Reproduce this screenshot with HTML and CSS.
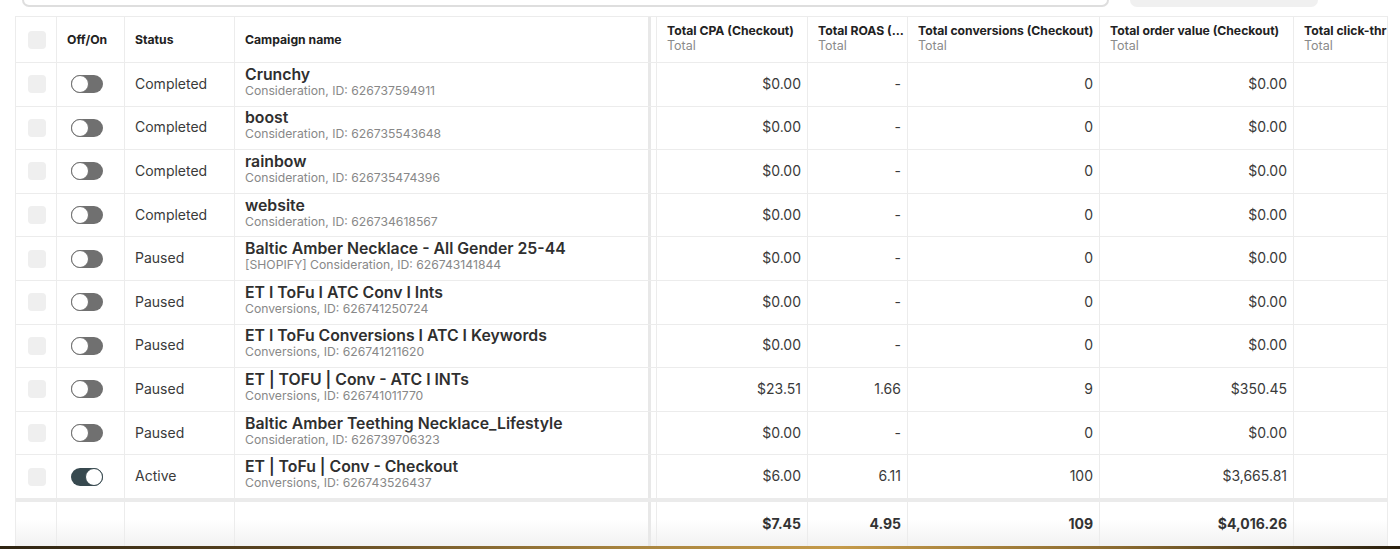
FILE: index.html
```html
<!DOCTYPE html>
<html>
<head>
<meta charset="utf-8">
<link rel="stylesheet" href="styles.css">
</head>
<body>
<div class="topbar">
  <div class="search"></div>
  <div class="pill"></div>
</div>
<div class="table">
  <div class="row head">
    <div class="cell chk"><span class="box"></span></div>
    <div class="cell">Off/On</div>
    <div class="cell">Status</div>
    <div class="cell name sticky">Campaign name</div>
    <div class="cell spacer"></div>
    <div class="cell metric"><span class="t">Total CPA (Checkout)</span><span class="s">Total</span></div>
    <div class="cell metric trunc"><span class="t">Total ROAS (...</span><span class="s">Total</span></div>
    <div class="cell metric"><span class="t">Total conversions (Checkout)</span><span class="s">Total</span></div>
    <div class="cell metric"><span class="t">Total order value (Checkout)</span><span class="s">Total</span></div>
    <div class="cell metric clip"><span class="t">Total click-thr</span><span class="s">Total</span></div>
  </div>

  <div class="row">
    <div class="cell chk"><span class="box"></span></div>
    <div class="cell tog"><span class="toggle"></span></div>
    <div class="cell status">Completed</div>
    <div class="cell name sticky"><span class="cn">Crunchy</span><span class="sub">Consideration, ID: 626737594911</span></div>
    <div class="cell spacer"></div>
    <div class="cell num">$0.00</div>
    <div class="cell num">-</div>
    <div class="cell num">0</div>
    <div class="cell num">$0.00</div>
    <div class="cell"></div>
  </div>
  <div class="row">
    <div class="cell chk"><span class="box"></span></div>
    <div class="cell tog"><span class="toggle"></span></div>
    <div class="cell status">Completed</div>
    <div class="cell name sticky"><span class="cn">boost</span><span class="sub">Consideration, ID: 626735543648</span></div>
    <div class="cell spacer"></div>
    <div class="cell num">$0.00</div>
    <div class="cell num">-</div>
    <div class="cell num">0</div>
    <div class="cell num">$0.00</div>
    <div class="cell"></div>
  </div>
  <div class="row">
    <div class="cell chk"><span class="box"></span></div>
    <div class="cell tog"><span class="toggle"></span></div>
    <div class="cell status">Completed</div>
    <div class="cell name sticky"><span class="cn">rainbow</span><span class="sub">Consideration, ID: 626735474396</span></div>
    <div class="cell spacer"></div>
    <div class="cell num">$0.00</div>
    <div class="cell num">-</div>
    <div class="cell num">0</div>
    <div class="cell num">$0.00</div>
    <div class="cell"></div>
  </div>
  <div class="row">
    <div class="cell chk"><span class="box"></span></div>
    <div class="cell tog"><span class="toggle"></span></div>
    <div class="cell status">Completed</div>
    <div class="cell name sticky"><span class="cn">website</span><span class="sub">Consideration, ID: 626734618567</span></div>
    <div class="cell spacer"></div>
    <div class="cell num">$0.00</div>
    <div class="cell num">-</div>
    <div class="cell num">0</div>
    <div class="cell num">$0.00</div>
    <div class="cell"></div>
  </div>
  <div class="row">
    <div class="cell chk"><span class="box"></span></div>
    <div class="cell tog"><span class="toggle"></span></div>
    <div class="cell status">Paused</div>
    <div class="cell name sticky"><span class="cn">Baltic Amber Necklace - All Gender 25-44</span><span class="sub">[SHOPIFY] Consideration, ID: 626743141844</span></div>
    <div class="cell spacer"></div>
    <div class="cell num">$0.00</div>
    <div class="cell num">-</div>
    <div class="cell num">0</div>
    <div class="cell num">$0.00</div>
    <div class="cell"></div>
  </div>
  <div class="row">
    <div class="cell chk"><span class="box"></span></div>
    <div class="cell tog"><span class="toggle"></span></div>
    <div class="cell status">Paused</div>
    <div class="cell name sticky"><span class="cn">ET I ToFu I ATC Conv I Ints</span><span class="sub">Conversions, ID: 626741250724</span></div>
    <div class="cell spacer"></div>
    <div class="cell num">$0.00</div>
    <div class="cell num">-</div>
    <div class="cell num">0</div>
    <div class="cell num">$0.00</div>
    <div class="cell"></div>
  </div>
  <div class="row">
    <div class="cell chk"><span class="box"></span></div>
    <div class="cell tog"><span class="toggle"></span></div>
    <div class="cell status">Paused</div>
    <div class="cell name sticky"><span class="cn">ET I ToFu Conversions I ATC I Keywords</span><span class="sub">Conversions, ID: 626741211620</span></div>
    <div class="cell spacer"></div>
    <div class="cell num">$0.00</div>
    <div class="cell num">-</div>
    <div class="cell num">0</div>
    <div class="cell num">$0.00</div>
    <div class="cell"></div>
  </div>
  <div class="row">
    <div class="cell chk"><span class="box"></span></div>
    <div class="cell tog"><span class="toggle"></span></div>
    <div class="cell status">Paused</div>
    <div class="cell name sticky"><span class="cn">ET | TOFU | Conv - ATC I INTs</span><span class="sub">Conversions, ID: 626741011770</span></div>
    <div class="cell spacer"></div>
    <div class="cell num">$23.51</div>
    <div class="cell num">1.66</div>
    <div class="cell num">9</div>
    <div class="cell num">$350.45</div>
    <div class="cell"></div>
  </div>
  <div class="row">
    <div class="cell chk"><span class="box"></span></div>
    <div class="cell tog"><span class="toggle"></span></div>
    <div class="cell status">Paused</div>
    <div class="cell name sticky"><span class="cn">Baltic Amber Teething Necklace_Lifestyle</span><span class="sub">Consideration, ID: 626739706323</span></div>
    <div class="cell spacer"></div>
    <div class="cell num">$0.00</div>
    <div class="cell num">-</div>
    <div class="cell num">0</div>
    <div class="cell num">$0.00</div>
    <div class="cell"></div>
  </div>
  <div class="row">
    <div class="cell chk"><span class="box"></span></div>
    <div class="cell tog"><span class="toggle on"></span></div>
    <div class="cell status">Active</div>
    <div class="cell name sticky"><span class="cn">ET | ToFu | Conv - Checkout</span><span class="sub">Conversions, ID: 626743526437</span></div>
    <div class="cell spacer"></div>
    <div class="cell num">$6.00</div>
    <div class="cell num">6.11</div>
    <div class="cell num">100</div>
    <div class="cell num">$3,665.81</div>
    <div class="cell"></div>
  </div>

  <div class="row foot">
    <div class="cell"></div>
    <div class="cell"></div>
    <div class="cell"></div>
    <div class="cell sticky"></div>
    <div class="cell spacer"></div>
    <div class="cell num">$7.45</div>
    <div class="cell num">4.95</div>
    <div class="cell num">109</div>
    <div class="cell num">$4,016.26</div>
    <div class="cell"></div>
  </div>
</div>
<div class="wallpaper"></div>
</body>
</html>
```

FILE: styles.css
```css
* { box-sizing: border-box; }
html, body {
  margin: 0;
  padding: 0;
  background: #fff;
  height: 549px;
  overflow: hidden;
}
body {
  font-family: Inter, "Liberation Sans", Arial, sans-serif;
  color: #333;
  font-size: 14px;
  display: flex;
  flex-direction: column;
}
.topbar {
  height: 16px;
  display: flex;
  align-items: flex-start;
  flex: none;
}
.search {
  margin-left: 22px;
  width: 1087px;
  height: 7px;
  border: 2px solid #dedede;
  border-top: none;
  border-radius: 0 0 12px 12px;
}
.pill {
  margin-left: 21px;
  width: 188px;
  height: 7px;
  background: #f0f0f0;
  border-radius: 0 0 12px 12px;
}
.table {
  margin-left: 15px;
  width: 1373px;
  border-left: 1px solid #ececec;
  border-top: 1px solid #ececec;
  overflow: hidden;
  flex: none;
}
.row {
  display: grid;
  grid-template-columns: 41px 68px 110px 416px 6px 151px 100px 192px 194px 94px;
  height: 43.6px;
  border-bottom: 1px solid #ececec;
}
.row.head {
  height: 46px;
}
.cell {
  border-right: 1px solid #ececec;
  padding: 0 10px;
  display: flex;
  align-items: center;
  overflow: hidden;
  white-space: nowrap;
  min-width: 0;
}
.head .cell {
  font-weight: 700;
  font-size: 12.2px;
  color: #222;
}
.cell.sticky {
  border-right: 3px solid #e8e8e8;
}
.cell.spacer {
  padding: 0;
}
.cell.chk {
  padding: 0;
  justify-content: center;
}
.box {
  width: 18px;
  height: 18px;
  border-radius: 4px;
  background: #efefef;
  margin-left: 1px;
}
.head .cell.metric {
  flex-direction: column;
  align-items: flex-start;
  justify-content: center;
  padding-bottom: 3px;
}
.metric .t {
  line-height: 15px;
}
.metric .s {
  font-weight: 400;
  color: #8a8a8a;
  font-size: 12.5px;
  line-height: 15px;
}
.head .cell.trunc {
  padding-right: 2px;
}
.head .cell.clip {
  padding-right: 0;
}
.cell.tog {
  padding: 0 0 0 14px;
}
.toggle {
  position: relative;
  width: 32px;
  height: 18px;
  border-radius: 9px;
  background: #707070;
  display: block;
}
.toggle::after {
  content: "";
  position: absolute;
  left: 0;
  top: 0;
  width: 18px;
  height: 18px;
  border-radius: 50%;
  background: #fff;
  border: 1.5px solid #707070;
  box-sizing: border-box;
}
.toggle.on {
  background: #37494f;
}
.toggle.on::after {
  left: 14px;
  border-color: #37494f;
}
.status {
  color: #3a3a3a;
  padding-bottom: 2px;
}
.cell.name {
  flex-direction: column;
  align-items: flex-start;
  justify-content: center;
  padding-bottom: 5px;
}
.head .cell.name {
  flex-direction: row;
  align-items: center;
  justify-content: flex-start;
  padding-bottom: 0;
}
.cn {
  font-size: 15.8px;
  font-weight: 600;
  color: #2f2f2f;
  line-height: 18px;
}
.sub {
  font-size: 12.2px;
  color: #888;
  line-height: 14px;
}
.cell.num {
  justify-content: flex-end;
  padding-right: 6px;
  padding-bottom: 2px;
  color: #3a3a3a;
}
.row.foot {
  border-top: 4px solid #ebebeb;
  height: 48px;
  margin-top: -1px;
  background: linear-gradient(to bottom, #ffffff 40%, #f2f2f2 100%);
  border-bottom: none;
}
.foot .cell.num {
  font-weight: 700;
  color: #333;
  padding-bottom: 0;
}
.wallpaper {
  flex: none;
  height: 3px;
  background: linear-gradient(to right, #2e2412 0%, #5a4420 20%, #a8843f 45%, #c49a4a 60%, #8a6a30 80%, #2a200e 100%);
}
```
